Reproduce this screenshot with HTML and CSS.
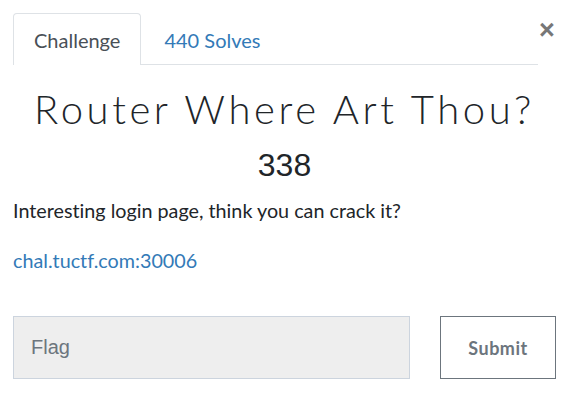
FILE: index.html
```html
<!DOCTYPE html>
<html>
<head>
<meta charset="utf-8">
<link rel="stylesheet" href="styles.css">
</head>
<body>
<div class="modal">
  <div class="head">
    <ul class="tabs">
      <li class="tab active">Challenge</li>
      <li class="tab link">440 Solves</li>
    </ul>
    <button class="close" aria-label="Close">&times;</button>
  </div>
  <div class="body">
    <h3 class="title">Router Where Art Thou?</h3>
    <h4 class="points">338</h4>
    <p class="desc">Interesting login page, think you can crack it?</p>
    <p class="desc"><a href="#" class="url">chal.tuctf.com:30006</a></p>
    <div class="submit-row">
      <input class="flag" type="text" placeholder="Flag">
      <button class="submit">Submit</button>
    </div>
  </div>
</div>
</body>
</html>
```
FILE: styles.css
```css
html, body {
  margin: 0;
  padding: 0;
  background: #fff;
}
body {
  font-family: Lato, "Noto Sans", sans-serif;
  color: #212529;
  font-variant-ligatures: no-common-ligatures;
}
.modal {
  padding: 13px 18px 0 13px;
}
.head {
  display: flex;
  align-items: flex-start;
}
.tabs {
  list-style: none;
  margin: 0;
  padding: 0;
  display: flex;
  gap: 2px;
  flex: 1;
  height: 52px;
  border-bottom: 1px solid #dee2e6;
  box-sizing: border-box;
}
.tab {
  font-size: 20px;
  padding: 0 20px;
  height: 52px;
  box-sizing: border-box;
  line-height: 52px;
  border: 1px solid transparent;
  border-bottom: none;
  border-radius: 4px 4px 0 0;
}
.tab.active {
  color: #495057;
  border-color: #dee2e6;
  background: #fff;
}
.tab.link {
  color: #337ab7;
}
.close {
  background: none;
  border: none;
  padding: 0;
  margin: 4px 0 0 0;
  width: 18px;
  font-family: "Liberation Sans", Arial, sans-serif;
  font-size: 27px;
  font-weight: 700;
  line-height: 1;
  color: #777;
}
.title {
  margin: 20px 0 0;
  text-align: center;
  font-family: Lato, sans-serif;
  font-weight: 300;
  font-size: 40px;
  line-height: 48px;
  letter-spacing: 3.6px;
  color: #212529;
}
.points {
  margin: 14px 0 0;
  text-align: center;
  font-family: "Liberation Sans", Arial, sans-serif;
  font-weight: 400;
  font-size: 32px;
  line-height: 36px;
  color: #212529;
}
.desc {
  margin: 13px 0 0;
  font-size: 19.75px;
  line-height: 30px;
  color: #212529;
}
.desc + .desc {
  margin-top: 20px;
}
.url {
  color: #337ab7;
  text-decoration: none;
}
.submit-row {
  display: flex;
  margin-top: 40px;
  gap: 30px;
}
.flag {
  flex: 0 0 397px;
  height: 63px;
  box-sizing: border-box;
  background: #eee;
  border: 1px solid #ccd4de;
  padding: 0 17px;
  font-family: "Liberation Sans", Arial, sans-serif;
  font-size: 20px;
  color: #495057;
  outline: none;
}
.flag::placeholder {
  color: #6c757d;
}
.submit {
  width: 116px;
  height: 63px;
  box-sizing: border-box;
  background: #fff;
  border: 1px solid #6c757d;
  color: #6c757d;
  font-family: Lato, sans-serif;
  font-weight: 700;
  font-size: 18px;
  letter-spacing: 0.5px;
}
```
